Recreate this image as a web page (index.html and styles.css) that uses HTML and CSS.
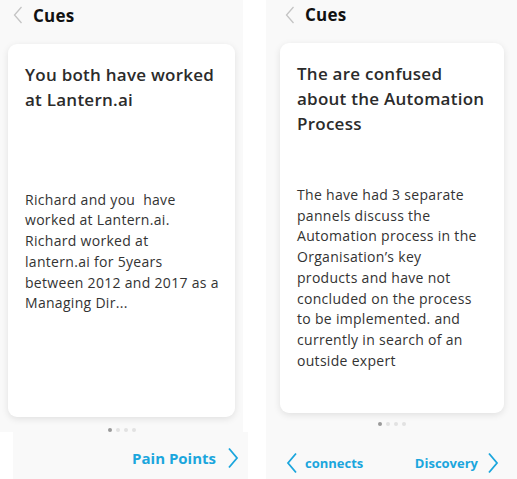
FILE: index.html
```html
<!DOCTYPE html>
<html>
<head>
<meta charset="utf-8">
<link rel="stylesheet" href="styles.css">
</head>
<body>
<div class="page">
  <div class="col-left">
    <div class="panel panel-left">
      <header class="header">
        <svg class="back" width="10" height="18" viewBox="0 0 10 18"><path d="M8.5 1 L1.5 9 L8.5 17" fill="none" stroke="#c4c4c4" stroke-width="1.3"/></svg>
        <span class="title">Cues</span>
      </header>
      <div class="card card-left">
        <h2 class="card-title">You both have worked at Lantern.ai</h2>
        <p class="card-body">Richard and you&nbsp; have<br>worked at Lantern.ai.<br>Richard worked at<br>lantern.ai for 5years<br>between 2012 and 2017 as a<br>Managing Dir...</p>
      </div>
      <div class="dots dots-left"><span class="dot on"></span><span class="dot"></span><span class="dot"></span><span class="dot"></span></div>
    </div>
    <nav class="bottom bottom-left">
      <span class="nav-link">Pain Points</span>
      <svg class="chev" width="12" height="22" viewBox="0 0 12 22"><path d="M2 1.5 L10 11 L2 20.5" fill="none" stroke="#1ba6dd" stroke-width="1.8"/></svg>
    </nav>
  </div>
  <div class="panel panel-right">
    <header class="header header-right">
      <svg class="back" width="10" height="18" viewBox="0 0 10 18"><path d="M8.5 1 L1.5 9 L8.5 17" fill="none" stroke="#c4c4c4" stroke-width="1.3"/></svg>
      <span class="title">Cues</span>
    </header>
    <div class="card card-right">
      <h2 class="card-title">The are confused about the Automation Process</h2>
      <p class="card-body">The have had 3 separate pannels discuss the Automation process in the Organisation’s key products and have not concluded on the process to be implemented. and currently in search of an outside expert</p>
    </div>
    <div class="dots dots-right"><span class="dot on"></span><span class="dot"></span><span class="dot"></span><span class="dot"></span></div>
    <nav class="bottom bottom-right">
      <div class="nav-side">
        <svg class="chev" width="12" height="22" viewBox="0 0 12 22"><path d="M10 1.5 L2 11 L10 20.5" fill="none" stroke="#1ba6dd" stroke-width="1.8"/></svg>
        <span class="nav-link small">connects</span>
      </div>
      <div class="nav-side nav-side-right">
        <span class="nav-link small">Discovery</span>
        <svg class="chev" width="12" height="22" viewBox="0 0 12 22"><path d="M2 1.5 L10 11 L2 20.5" fill="none" stroke="#1ba6dd" stroke-width="1.8"/></svg>
      </div>
    </nav>
  </div>
</div>
</body>
</html>
```
FILE: styles.css
```css
* { box-sizing: border-box; }
html, body { margin: 0; padding: 0; background: #ffffff; }
body { font-family: "Open Sans", "DejaVu Sans", sans-serif; color: #333; }
.page { display: flex; width: 517px; height: 479px; overflow: hidden; }
.col-left { width: 248px; display: flex; flex-direction: column; }
.panel { background: #f9f9f9; }
.panel-left { width: 243px; height: 432px; padding: 0 8px; display: flex; flex-direction: column; }
.panel-right { width: 251px; margin-left: 18px; height: 479px; padding: 0 13px 0 14px; display: flex; flex-direction: column; }
.header { height: 31px; display: flex; align-items: center; gap: 10px; padding-left: 5px; }
.header-right { height: 29px; padding-left: 5px; }
.title { font-size: 17px; font-weight: 700; color: #111; letter-spacing: 0.2px; }
.card { background: #fff; border-radius: 9px; box-shadow: 0 2px 7px rgba(0,0,0,0.10); padding: 18px 8px 18px 17px; }
.card-left { margin-top: 13px; height: 376px; }
.card-right { margin-top: 14px; height: 370px; }
.card-title { margin: 0; font-size: 17px; font-weight: 600; line-height: 25px; color: #2b2b2b; letter-spacing: 0.25px; padding-right: 5px; }
.card-left .card-title { min-height: 128px; }
.card-right .card-title { min-height: 124px; padding-right: 9px; }
.card-body { margin: 0; font-size: 14px; line-height: 20.7px; color: #333; letter-spacing: 0.3px; }
.card-right .card-body { padding-right: 16px; }
.dots { display: flex; justify-content: center; gap: 4px; }
.dot { width: 4px; height: 4px; border-radius: 50%; background: #e2e2e2; }
.dot.on { background: #9a9a9a; }
.dots-left { margin-top: 11px; }
.dots-right { margin-top: 9px; }
.bottom { background: #f9f9f9; display: flex; align-items: center; }
.bottom-left { margin-left: 13px; width: 235px; height: 47px; justify-content: flex-end; padding: 4px 9px 0 0; gap: 11px; }
.bottom-right { margin-top: auto; height: 32px; justify-content: space-between; padding: 0 5px 0 6px; }
.nav-side { display: flex; align-items: center; gap: 7px; }
.nav-side-right { gap: 9px; }
.nav-link { color: #1ba6dd; font-weight: 700; font-size: 15px; }
.nav-link.small { font-size: 13px; }
```
